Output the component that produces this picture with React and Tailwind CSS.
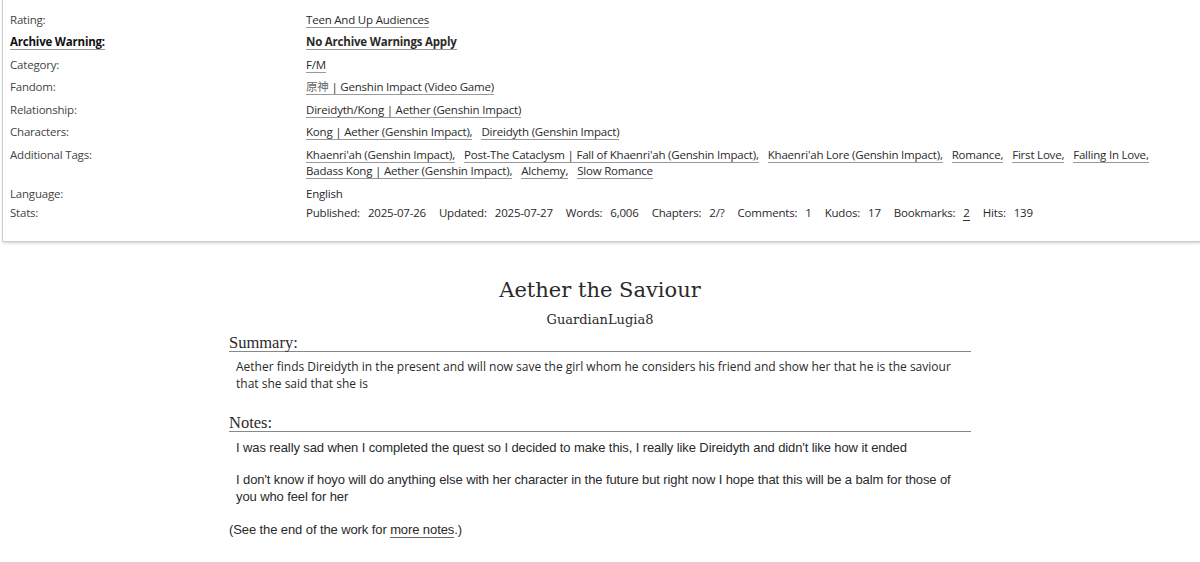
const sans = { fontFamily: '"Open Sans", "DejaVu Sans", sans-serif' };
const notesFont = { fontFamily: '"Liberation Sans", Arial, sans-serif' };

function Tag({ children, last }) {
  return (
    <span className="inline-block mr-[9px]">
      <a className="text-[#2a2a2a] border-b border-[#999] leading-[15px]">
        {children}
        {last ? '' : ','}
      </a>
    </span>
  );
}

function Row({ label, bold, className = '', children }) {
  return (
    <>
      <dt className={`leading-4 ${className} ${bold ? 'font-bold text-[#111]' : 'text-[#444]'}`}>
        {bold ? <span className="border-b border-[#999]">{label}</span> : label}
      </dt>
      <dd className={`leading-4 ${className}`}>{children}</dd>
    </>
  );
}

export default function App() {
  const additional = [
    "Khaenri'ah (Genshin Impact)",
    "Post-The Cataclysm | Fall of Khaenri'ah (Genshin Impact)",
    "Khaenri'ah Lore (Genshin Impact)",
    'Romance',
    'First Love',
    'Falling In Love',
    'Badass Kong | Aether (Genshin Impact)',
    'Alchemy',
    'Slow Romance',
  ];

  const stats = [
    ['Published:', '2025-07-26'],
    ['Updated:', '2025-07-27'],
    ['Words:', '6,006'],
    ['Chapters:', '2/?'],
    ['Comments:', '1'],
    ['Kudos:', '17'],
    ['Bookmarks:', '2'],
    ['Hits:', '139'],
  ];

  return (
    <div className="w-[1200px] h-[562px] bg-white overflow-hidden text-[#2a2a2a]">
      <div
        className="ml-[2px] border-l border-b border-[#ccc] shadow-[1px_1px_3px_#ccc] pl-[7px] pt-[11.5px] pb-[19.5px] text-[11.5px] tracking-[-0.2px]"
        style={sans}
      >
        <dl className="grid grid-cols-[296px_1fr] gap-y-[6.6px]">
          <Row label="Rating:">
            <Tag last>Teen And Up Audiences</Tag>
          </Row>
          <Row label="Archive Warning:" bold>
            <span className="font-bold text-[#111]">
              <Tag last>No Archive Warnings Apply</Tag>
            </span>
          </Row>
          <Row label="Category:">
            <Tag last>F/M</Tag>
          </Row>
          <Row label="Fandom:">
            <Tag last>
              <span style={{ fontFamily: '"Noto Sans CJK SC", sans-serif' }} className="text-[#666]">原神</span> | Genshin Impact (Video Game)
            </Tag>
          </Row>
          <Row label="Relationship:">
            <Tag last>Direidyth/Kong | Aether (Genshin Impact)</Tag>
          </Row>
          <Row label="Characters:">
            <Tag>Kong | Aether (Genshin Impact)</Tag>
            <Tag last>Direidyth (Genshin Impact)</Tag>
          </Row>
          <Row label="Additional Tags:">
            {additional.map((t, i) => (
              <Tag key={t} last={i === additional.length - 1}>
                {t}
              </Tag>
            ))}
          </Row>
          <Row label="Language:">English</Row>
          <Row label="Stats:" className="-mt-[3px]">
            <div className="flex gap-x-[13px]">
              {stats.map(([k, v]) => (
                <span key={k} className="flex gap-x-[8px]">
                  <span>{k}</span>
                  {k === 'Bookmarks:' ? (
                    <span className="border-b border-[#333] leading-[15px]">{v}</span>
                  ) : (
                    <span>{v}</span>
                  )}
                </span>
              ))}
            </div>
          </Row>
        </dl>
      </div>

      <div className="w-[742px] mx-auto pt-[33px]">
        <h2
          className="text-center text-[21px] leading-[30px] text-[#2a2a2a]"
          style={{ fontFamily: '"DejaVu Serif", Georgia, serif' }}
        >
          Aether the Saviour
        </h2>
        <h3
          className="text-center text-[13px] leading-[20px] mt-[5px]"
          style={{ fontFamily: '"DejaVu Serif", Georgia, serif' }}
        >
          GuardianLugia8
        </h3>

        <h3
          className="mt-[4px] text-[16.5px] leading-[17px] border-b border-[#888] text-[#2a2a2a]"
          style={{ fontFamily: '"Liberation Serif", serif' }}
        >
          Summary:
        </h3>
        <p className="pl-[7px] mt-[6px] text-[12px] leading-[17px]" style={sans}>
          Aether finds Direidyth in the present and will now save the girl whom he considers his friend and show her that he is the saviour
          that she said that she is
        </p>

        <h3
          className="mt-[22px] text-[16.5px] leading-[17px] border-b border-[#888]"
          style={{ fontFamily: '"Liberation Serif", serif' }}
        >
          Notes:
        </h3>
        <div className="pl-[7px] mt-[7.5px] text-[13px] leading-[17px] tracking-[-0.1px]" style={notesFont}>
          <p>I was really sad when I completed the quest so I decided to make this, I really like Direidyth and didn't like how it ended</p>
          <p className="mt-[15px]">
            I don't know if hoyo will do anything else with her character in the future but right now I hope that this will be a balm for those of
            you who feel for her
          </p>
        </div>
        <p className="mt-[16px] text-[13px] leading-[17px] tracking-[-0.1px]" style={notesFont}>
          (See the end of the work for <a className="border-b border-[#666]">more notes</a>.)
        </p>
      </div>
    </div>
  );
}
